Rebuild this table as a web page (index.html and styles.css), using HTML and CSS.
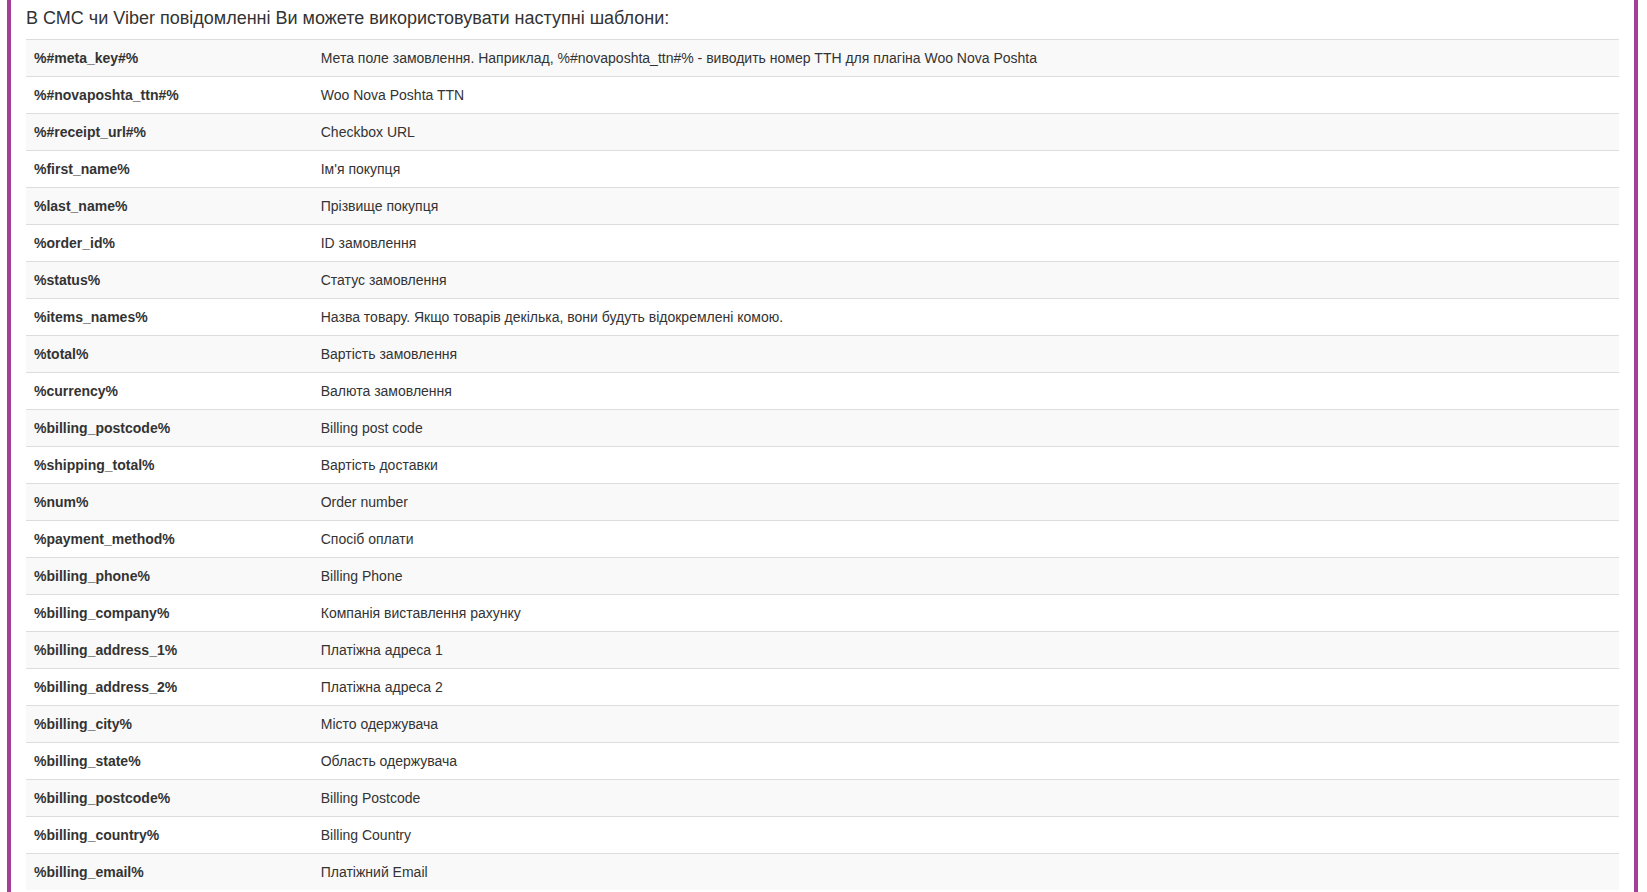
FILE: index.html
```html
<!DOCTYPE html>
<html lang="uk">
<head>
<meta charset="utf-8">
<title>Шаблони</title>
<link rel="stylesheet" href="styles.css">
</head>
<body>
<div class="panel">
  <h4 class="title">В СМС чи Viber повідомленні Ви можете використовувати наступні шаблони:</h4>
  <table class="tpl">
    <tbody>
      <tr><th>%#meta_key#%</th><td>Мета поле замовлення. Наприклад, %#novaposhta_ttn#% - виводить номер ТТН для плагіна Woo Nova Poshta</td></tr>
      <tr><th>%#novaposhta_ttn#%</th><td>Woo Nova Poshta TTN</td></tr>
      <tr><th>%#receipt_url#%</th><td>Checkbox URL</td></tr>
      <tr><th>%first_name%</th><td>Ім'я покупця</td></tr>
      <tr><th>%last_name%</th><td>Прізвище покупця</td></tr>
      <tr><th>%order_id%</th><td>ID замовлення</td></tr>
      <tr><th>%status%</th><td>Статус замовлення</td></tr>
      <tr><th>%items_names%</th><td>Назва товару. Якщо товарів декілька, вони будуть відокремлені комою.</td></tr>
      <tr><th>%total%</th><td>Вартість замовлення</td></tr>
      <tr><th>%currency%</th><td>Валюта замовлення</td></tr>
      <tr><th>%billing_postcode%</th><td>Billing post code</td></tr>
      <tr><th>%shipping_total%</th><td>Вартість доставки</td></tr>
      <tr><th>%num%</th><td>Order number</td></tr>
      <tr><th>%payment_method%</th><td>Спосіб оплати</td></tr>
      <tr><th>%billing_phone%</th><td>Billing Phone</td></tr>
      <tr><th>%billing_company%</th><td>Компанія виставлення рахунку</td></tr>
      <tr><th>%billing_address_1%</th><td>Платіжна адреса 1</td></tr>
      <tr><th>%billing_address_2%</th><td>Платіжна адреса 2</td></tr>
      <tr><th>%billing_city%</th><td>Місто одержувача</td></tr>
      <tr><th>%billing_state%</th><td>Область одержувача</td></tr>
      <tr><th>%billing_postcode%</th><td>Billing Postcode</td></tr>
      <tr><th>%billing_country%</th><td>Billing Country</td></tr>
      <tr><th>%billing_email%</th><td>Платіжний Email</td></tr>
    </tbody>
  </table>
</div>
</body>
</html>
```
FILE: styles.css
```css
html, body {
  margin: 0;
  padding: 0;
  background: #ffffff;
}
body {
  font-family: "Liberation Sans", Arial, sans-serif;
  font-size: 14px;
  line-height: 20px;
  color: #333333;
  overflow: hidden;
}
.panel {
  margin: 0 9px 0 7px;
  border-left: 4px solid #a33f98;
  border-right: 4px solid #a33f98;
  padding: 8px 15px 0 15px;
  min-height: 900px;
}
.title {
  margin: 0 0 11px 0;
  font-size: 18px;
  line-height: 20px;
  font-weight: 400;
  color: #333333;
}
.tpl {
  width: 100%;
  border-collapse: collapse;
  border-spacing: 0;
}
.tpl th,
.tpl td {
  padding: 8px;
  border-top: 1px solid #dddddd;
  text-align: left;
  vertical-align: top;
  line-height: 20px;
}
.tpl th {
  width: 18%;
  font-weight: 700;
}
.tpl td {
  font-weight: 400;
}
.tpl tr:nth-child(odd) {
  background: #f9f9f9;
}
```
